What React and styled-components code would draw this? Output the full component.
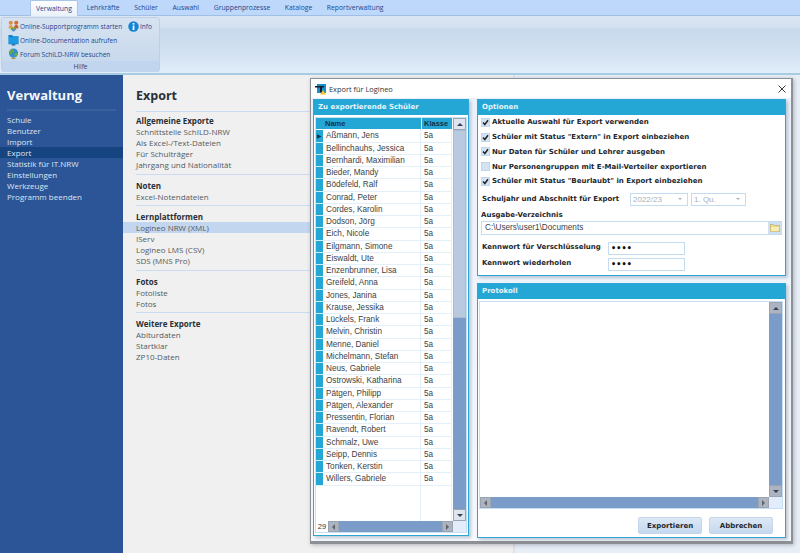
import { Fragment } from 'react';
import styled, { createGlobalStyle } from 'styled-components';

const STUDENTS = [
    'Aßmann, Jens', 'Bellinchauhs, Jessica', 'Bernhardi, Maximilian', 'Bieder, Mandy', 'Bödefeld, Ralf',
    'Conrad, Peter', 'Cordes, Karolin', 'Dodson, Jörg', 'Eich, Nicole', 'Eilgmann, Simone',
    'Eiswaldt, Ute', 'Enzenbrunner, Lisa', 'Greifeld, Anna', 'Jones, Janina', 'Krause, Jessika',
    'Lückels, Frank', 'Melvin, Christin', 'Menne, Daniel', 'Michelmann, Stefan', 'Neus, Gabriele',
    'Ostrowski, Katharina', 'Pätgen, Philipp', 'Pätgen, Alexander', 'Pressentin, Florian', 'Ravendt, Robert',
    'Schmalz, Uwe', 'Seipp, Dennis', 'Tonken, Kerstin', 'Willers, Gabriele',
];

const TABS = ['Verwaltung', 'Lehrkräfte', 'Schüler', 'Auswahl', 'Gruppenprozesse', 'Kataloge', 'Reportverwaltung'];

const NAV = ['Schule', 'Benutzer', 'Import', 'Export', 'Statistik für IT.NRW', 'Einstellungen', 'Werkzeuge', 'Programm beenden'];

const SECTIONS = [
    { title: 'Allgemeine Exporte', items: ['Schnittstelle SchILD-NRW', 'Als Excel-/Text-Dateien', 'Für Schulträger', 'Jahrgang und Nationalität'] },
    { title: 'Noten', items: ['Excel-Notendateien'] },
    { title: 'Lernplattformen', items: ['Logineo NRW (XML)', 'IServ', 'Logineo LMS (CSV)', 'SDS (MNS Pro)'] },
    { title: 'Fotos', items: ['Fotoliste', 'Fotos'] },
    { title: 'Weitere Exporte', items: ['Abiturdaten', 'Startklar', 'ZP10-Daten'] },
];

const OPTIONS = [
    { label: 'Aktuelle Auswahl für Export verwenden', checked: true },
    { label: 'Schüler mit Status "Extern" in Export einbeziehen', checked: true },
    { label: 'Nur Daten für Schüler und Lehrer ausgeben', checked: true },
    { label: 'Nur Personengruppen mit E-Mail-Verteiler exportieren', checked: false },
    { label: 'Schüler mit Status "Beurlaubt" in Export einbeziehen', checked: true },
];

const GlobalStyle = createGlobalStyle`
    html, body {
        margin: 0;
        height: 553px;
        overflow: hidden;
        background: #f0f0f0;
    }
    * {
        box-sizing: border-box;
    }
`;

const Page = styled.div`
    position: relative;
    display: flex;
    flex-direction: column;
    width: 800px;
    height: 553px;
    font-family: 'Open Sans', 'Liberation Sans', sans-serif;
`;

const TabStrip = styled.div`
    display: flex;
    align-items: flex-end;
    height: 16px;
    padding-left: 30px;
    background: #bdd8fb;
    border-bottom: 1px solid #9fbfe4;
`;

const Tab = styled.div`
    height: ${({ $active }) => ($active ? '16px' : '15px')};
    margin-bottom: ${({ $active }) => ($active ? '-1px' : '0')};
    margin-right: ${({ $active }) => ($active ? '1.5px' : '0')};
    padding: 0 ${({ $active }) => ($active ? '5px' : '7.3px')};
    font-size: 6.8px;
    line-height: 15px;
    color: #23468c;
    background: ${({ $active }) => ($active ? 'linear-gradient(#fdfeff, #eaf1fa)' : 'transparent')};
    border: ${({ $active }) => ($active ? '1px solid #a9c6e8' : '0')};
    border-bottom: 0;
    border-radius: 2px 2px 0 0;
`;

const Ribbon = styled.div`
    display: flex;
    height: 59px;
    padding: 1px;
    background: linear-gradient(#dbe6f3 0, #d6e2f0 10px, #c8d9ec 14px, #d3e2f2 38px, #e1edfa 57px);
    border-bottom: 2px solid #a6cce2;
`;

const RibbonGroup = styled.div`
    display: flex;
    flex-direction: column;
    width: 159px;
    height: 55px;
    background: linear-gradient(#d6e2f0, #c6d8ec);
    border: 1px solid #bcd0e7;
    border-radius: 3px;
`;

const RibbonBody = styled.div`
    flex: 1;
    display: grid;
    grid-template-columns: 120px auto;
    grid-template-rows: repeat(3, 14px);
    align-content: start;
    padding: 1px 0 0 6px;
`;

const RibbonAction = styled.div`
    display: flex;
    align-items: center;
    gap: 1px;
    font-size: 6.5px;
    white-space: nowrap;
    color: #23468c;
    svg {
        flex: none;
    }
`;

const RibbonCaption = styled.div`
    height: 11px;
    font-size: 6.6px;
    line-height: 11px;
    text-align: center;
    color: #23468c;
    background: #c1d6ee;
`;

const Main = styled.div`
    flex: 1;
    display: flex;
    min-height: 0;
`;

const Sidebar = styled.nav`
    width: 123px;
    padding: 13px 0 0;
    background: #2b5597;
`;

const SidebarTitle = styled.h1`
    margin: 0 7px;
    height: 23px;
    font-size: 13px;
    line-height: 15px;
    font-weight: 700;
    color: #f4f7fb;
    border-bottom: 2px solid #38619e;
`;

const NavList = styled.div`
    margin-top: 3px;
`;

const NavItem = styled.div`
    height: 11px;
    padding-left: 7px;
    font-size: 8px;
    line-height: 11px;
    color: #dbe5f2;
    background: ${({ $active }) => ($active ? '#164480' : 'transparent')};
`;

const Content = styled.section`
    width: 392px;
    padding-top: 13px;
    background: #f0f0f0;
    border-right: 2px solid #dde1e6;
`;

const ContentTitle = styled.h2`
    margin: 0 0 0 13px;
    height: 23px;
    font-size: 12.5px;
    line-height: 15px;
    font-weight: 700;
    color: #2b2f36;
`;

const Section = styled.div`
    padding-bottom: 3.5px;
    &::before {
        content: '';
        display: block;
        height: 1px;
        margin: 0 0 5px 13px;
        background: #cbdcf0;
    }
    &:first-of-type::before {
        margin-bottom: 3px;
    }
`;

const SectionTitle = styled.div`
    height: 11px;
    padding-left: 13px;
    font-size: 8px;
    line-height: 11px;
    font-weight: 700;
    color: #2b2f36;
`;

const SectionItem = styled.div`
    height: 11px;
    padding-left: 13px;
    font-size: 8px;
    line-height: 11px;
    color: #555a60;
    background: ${({ $active }) => ($active ? '#c3d6f0' : 'transparent')};
`;

const Backdrop = styled.div`
    flex: 1;
    background: #e8eef6;
`;

const Dialog = styled.div`
    position: absolute;
    left: 310px;
    top: 78px;
    display: flex;
    flex-direction: column;
    width: 483px;
    height: 466px;
    background: linear-gradient(#eaf1fb, #f6f9fd);
    border: 1px solid #8d9094;
    border-bottom-width: 3px;
    border-right-width: 2px;
    box-shadow: 1px 1px 4px rgba(60, 70, 90, 0.35);
`;

const DialogTitle = styled.div`
    display: flex;
    align-items: center;
    gap: 2px;
    height: 19px;
    padding: 0 5px 0 4px;
    font-size: 7.4px;
    color: #30343a;
    background: #fff;
    svg {
        flex: none;
    }
`;

const CloseButton = styled.div`
    margin-left: auto;
    display: flex;
`;

const DialogBody = styled.div`
    flex: 1;
    display: flex;
    gap: 8px;
    padding: 1px 5px 3px 2px;
    min-height: 0;
`;

const RightColumn = styled.div`
    flex: 1;
    display: flex;
    flex-direction: column;
    gap: 7px;
`;

const Panel = styled.div`
    display: flex;
    flex-direction: column;
    width: ${({ $width }) => $width || 'auto'};
    height: ${({ $height }) => $height || 'auto'};
    flex: ${({ $grow }) => ($grow ? 1 : 'none')};
    background: #fff;
    border: 1px solid #2ba6d6;
    box-shadow: 2px 2px 3px rgba(90, 110, 140, 0.35);
`;

const PanelHeader = styled.div`
    flex: none;
    height: 15px;
    padding-left: 4px;
    font-family: 'DejaVu Sans', sans-serif;
    font-size: 7px;
    font-weight: 700;
    line-height: 15px;
    color: #e6f5fb;
    background: #25a7d6;
`;

const ListFrame = styled.div`
    flex: 1;
    display: grid;
    grid-template-columns: 1fr 13px;
    grid-template-rows: 1fr 11px;
    margin: 2px 1px 2px 1px;
    min-height: 0;
    border: 1px solid #c6dff3;
`;

const Table = styled.div`
    display: grid;
    grid-template-columns: 7px 98px 31px;
    grid-auto-rows: 12.25px;
    align-content: start;
    overflow: hidden;
    font-family: 'Liberation Sans', sans-serif;
    font-size: 8.2px;
    color: #3c3f44;
    background:
        linear-gradient(#e3eff9, #e3eff9) 104px 0 / 1px 100% no-repeat,
        linear-gradient(#e3eff9, #e3eff9) 135px 0 / 1px 100% no-repeat;
`;

const HeaderCell = styled.div`
    height: 11px;
    padding-left: 2px;
    font-size: 7.5px;
    font-weight: 700;
    line-height: 11px;
    color: #10314c;
    background: #25a7d6;
    border-left: ${({ $divided }) => ($divided ? '1px solid #d6eef8' : '0')};
`;

const Indicator = styled.div`
    background: #25a7d6;
    border-bottom: 1px solid #d6eef8;
    color: #14344f;
    font-size: 6px;
    line-height: 12px;
    text-align: center;
`;

const Cell = styled.div`
    padding-left: 3px;
    line-height: 12px;
    white-space: nowrap;
    border-bottom: 1px solid #e3eff9;
    border-right: 1px solid #e3eff9;
`;

const ScrollBar = styled.div`
    display: flex;
    flex-direction: ${({ $horizontal }) => ($horizontal ? 'row' : 'column')};
    justify-content: space-between;
    background: #7b9bc8;
`;

const RowCount = styled.div`
    width: 12px;
    flex: none;
    font-family: 'Liberation Sans', sans-serif;
    font-size: 7.5px;
    line-height: 11px;
    text-align: center;
    color: #33363b;
    background: #fff;
`;

const ScrollThumb = styled.div`
    flex: none;
    height: 188px;
    margin-bottom: auto;
    width: 100%;
    background: #b9c9df;
    border: 1px solid #a9bcd6;
`;

const ScrollButton = styled.div`
    flex: none;
    display: flex;
    align-items: center;
    justify-content: center;
    width: ${({ $size }) => $size || '100%'};
    height: ${({ $size }) => $size || '12px'};
    background: ${({ $light }) => ($light ? '#dfe5ee' : '#adb4bf')};
    border: 1px solid #9aa4b3;
`;

const ScrollCorner = styled.div`
    background: #e2ecfa;
`;

const Arrow = styled.span`
    width: 0;
    height: 0;
    border-style: solid;
    border-width: ${({ $dir }) => ($dir === 'up' || $dir === 'down' ? '3px 3.5px' : '3px')};
    border-color: transparent;
    border-bottom-color: ${({ $dir }) => ($dir === 'up' ? '#33415c' : 'transparent')};
    border-top-color: ${({ $dir }) => ($dir === 'down' ? '#33415c' : 'transparent')};
    border-left-color: ${({ $dir }) => ($dir === 'right' ? '#5e646e' : 'transparent')};
    border-right-color: ${({ $dir }) => ($dir === 'left' ? '#5e646e' : 'transparent')};
    margin-top: ${({ $dir }) => ($dir === 'up' ? '-3px' : $dir === 'down' ? '3px' : '0')};
    margin-left: ${({ $dir }) => ($dir === 'left' ? '-3px' : $dir === 'right' ? '3px' : '0')};
`;

const OptionsBody = styled.div`
    flex: 1;
    display: flex;
    flex-direction: column;
    padding: 0 3px;
    font-family: 'DejaVu Sans', sans-serif;
    font-size: 7px;
    font-weight: 700;
    color: #23272d;
`;

const CheckRow = styled.label`
    display: flex;
    align-items: center;
    gap: 2px;
    height: 14.75px;
    white-space: nowrap;
`;

const CheckBox = styled.span`
    flex: none;
    display: flex;
    align-items: center;
    justify-content: center;
    width: 9px;
    height: 9px;
    background: #d3e3f4;
    border: 1px solid #c3d6ec;
`;

const YearRow = styled.div`
    display: flex;
    align-items: center;
    height: 15px;
    margin-top: 3px;
    white-space: nowrap;
`;

const YearLabel = styled.span`
    width: 149px;
    padding-left: 1px;
`;

const Select = styled.div`
    display: flex;
    align-items: center;
    justify-content: space-between;
    width: ${({ $width }) => $width};
    height: 13px;
    margin-right: 3px;
    padding: 0 5px 0 2px;
    font-family: 'Liberation Sans', sans-serif;
    font-size: 8px;
    font-weight: 400;
    color: #a9b0ba;
    background: #fff;
    border: 1px solid #c4dcf2;
`;

const Caret = styled.span`
    width: 0;
    height: 0;
    border: 2px solid transparent;
    border-top: 2px solid #a9b0ba;
    margin-top: 2px;
`;

const FieldLabel = styled.div`
    height: 10px;
    margin-top: 3px;
    line-height: 10px;
`;

const PathField = styled.div`
    display: flex;
    align-items: center;
    justify-content: space-between;
    height: 14px;
    margin-top: 1px;
    padding-left: 3px;
    font-family: 'Liberation Sans', sans-serif;
    font-size: 8.2px;
    font-weight: 400;
    color: #3c3f44;
    border: 1px solid #c4dcf2;
`;

const FolderButton = styled.div`
    display: flex;
    align-items: center;
    justify-content: center;
    width: 13px;
    height: 12px;
    background: #cfe0f3;
`;

const PasswordRow = styled.div`
    display: flex;
    align-items: center;
    height: 15px;
    margin-top: ${({ $first }) => ($first ? '6px' : '1px')};
    padding-left: 1px;
`;

const PasswordLabel = styled.span`
    width: 126px;
    margin-top: -2px;
`;

const PasswordField = styled.div`
    width: 77px;
    height: 13px;
    padding-left: 2px;
    font-size: 8px;
    line-height: 12px;
    color: #111;
    letter-spacing: 0.1px;
    border: 1px solid #c4dcf2;
`;

const LogFrame = styled(ListFrame)`
    flex: none;
    height: 208px;
    margin: 2px 2px 0 1px;
    background: #fff;
`;

const ButtonBar = styled.div`
    display: flex;
    justify-content: flex-end;
    gap: 7px;
    margin-top: 8px;
    padding-right: 12px;
`;

const Button = styled.button`
    width: 64px;
    height: 17px;
    padding: 0;
    font-family: 'DejaVu Sans', sans-serif;
    font-size: 7px;
    font-weight: 700;
    color: #23272d;
    background: linear-gradient(#dde8f5, #c5d8ee);
    border: 1px solid #c3d6ec;
    border-radius: 2px;
`;

const LogBlank = styled.div`
    background: #fff;
`;

const Horizontal = styled.div`
    display: flex;
    min-width: 0;
`;

const HorizontalTrack = styled(ScrollBar)`
    flex: 1;
`;

const SupportIcon = () => (
    <svg width="11" height="12" viewBox="0 0 12 13">
        <circle cx="3" cy="3" r="2.2" fill="#e08a3c" />
        <circle cx="9" cy="3" r="2.2" fill="#d9692b" />
        <path d="M0.5 9c0-2.5 1.2-4 2.5-4s2.5 1.5 2.5 4z" fill="#e9a24b" />
        <path d="M6.5 9c0-2.5 1.2-4 2.5-4s2.5 1.5 2.5 4z" fill="#c85a2c" />
        <rect x="3" y="8" width="6" height="3" fill="#7aa23f" />
        <circle cx="6" cy="11" r="1.5" fill="#5a8ed0" />
    </svg>
);

const DocIcon = () => (
    <svg width="11" height="12" viewBox="0 0 12 13">
        <path d="M0.5 1h4l1 1.5h6v8.5h-11z" fill="#0d84cf" />
        <rect x="1" y="3.5" width="10" height="7" fill="#1c9be0" />
        <rect x="4" y="11" width="4" height="1.5" fill="#27639b" />
    </svg>
);

const GlobeIcon = () => (
    <svg width="11" height="12" viewBox="0 0 12 13">
        <circle cx="6" cy="5.5" r="5" fill="#2f8fd0" />
        <path d="M2.5 2.5c2-1.5 3.5-1 4 0s-1 2-2 2.5-1 2-2 1.5-1.5-2.5 0-4zM7 6c1.5-1 3-.5 3.5 0s-1 3.5-2 3.5-2-2.5-1.5-3.5z" fill="#6ea93a" />
        <rect x="4" y="10.5" width="4" height="1.5" fill="#b68a3a" />
    </svg>
);

const InfoIcon = () => (
    <svg width="11" height="11" viewBox="0 0 11 11">
        <circle cx="5.5" cy="5.5" r="5.2" fill="#1484d6" />
        <rect x="4.7" y="4.5" width="1.7" height="4.5" fill="#fff" />
        <rect x="4.7" y="2" width="1.7" height="1.6" fill="#fff" />
    </svg>
);

const WindowIcon = () => (
    <svg width="12" height="12" viewBox="0 0 12 12">
        <rect x="2" y="1" width="9" height="9" fill="#1b8fc9" />
        <path d="M0 3h9v1.5H7v5H5v-5H0z" fill="#10202f" />
        <path d="M8 7l3 4.5H5z" fill="#f2c230" />
    </svg>
);

const CloseIcon = () => (
    <svg width="8" height="8" viewBox="0 0 8 8">
        <path d="M0.5 0.5l7 7M7.5 0.5l-7 7" stroke="#3a3d42" strokeWidth="1" fill="none" />
    </svg>
);

const CheckMark = () => (
    <svg width="7" height="7" viewBox="0 0 7 7">
        <path d="M1 3.5l1.8 2L6 1.2" stroke="#20252c" strokeWidth="1.5" fill="none" />
    </svg>
);

const FolderIcon = () => (
    <svg width="10" height="9" viewBox="0 0 10 9">
        <path d="M0.5 1.5h3l1 1h5v6h-9z" fill="#f0dc8c" stroke="#b9a14c" strokeWidth="0.6" />
        <path d="M1 4h8.5l-1 4.3H0.8z" fill="#f8ecb0" />
    </svg>
);

const VerticalScroll = ({ thumb }) => (
    <ScrollBar>
        <ScrollButton $light={thumb}>
            <Arrow $dir="up" />
        </ScrollButton>
        {thumb && <ScrollThumb />}
        <ScrollButton $light={thumb}>
            <Arrow $dir="down" />
        </ScrollButton>
    </ScrollBar>
);

const HorizontalScroll = ({ count }) => (
    <Horizontal>
        {count && <RowCount>{count}</RowCount>}
        <HorizontalTrack $horizontal>
            <ScrollButton $size="11px">
                <Arrow $dir="left" />
            </ScrollButton>
            <ScrollButton $size="11px">
                <Arrow $dir="right" />
            </ScrollButton>
        </HorizontalTrack>
    </Horizontal>
);

export default function App() {
    return (
        <Page>
            <GlobalStyle />
            <TabStrip>
                {TABS.map((tab, index) => (
                    <Tab key={tab} $active={index === 0}>
                        {tab}
                    </Tab>
                ))}
            </TabStrip>
            <Ribbon>
                <RibbonGroup>
                    <RibbonBody>
                        <RibbonAction>
                            <SupportIcon />
                            Online-Supportprogramm starten
                        </RibbonAction>
                        <RibbonAction>
                            <InfoIcon />
                            Info
                        </RibbonAction>
                        <RibbonAction>
                            <DocIcon />
                            Online-Documentation aufrufen
                        </RibbonAction>
                        <span />
                        <RibbonAction>
                            <GlobeIcon />
                            Forum SchILD-NRW besuchen
                        </RibbonAction>
                    </RibbonBody>
                    <RibbonCaption>Hilfe</RibbonCaption>
                </RibbonGroup>
            </Ribbon>
            <Main>
                <Sidebar>
                    <SidebarTitle>Verwaltung</SidebarTitle>
                    <NavList>
                        {NAV.map((item) => (
                            <NavItem key={item} $active={item === 'Export'}>
                                {item}
                            </NavItem>
                        ))}
                    </NavList>
                </Sidebar>
                <Content>
                    <ContentTitle>Export</ContentTitle>
                    {SECTIONS.map(({ title, items }) => (
                        <Section key={title}>
                            <SectionTitle>{title}</SectionTitle>
                            {items.map((item) => (
                                <SectionItem key={item} $active={item === 'Logineo NRW (XML)'}>
                                    {item}
                                </SectionItem>
                            ))}
                        </Section>
                    ))}
                </Content>
                <Backdrop />
            </Main>
            <Dialog>
                <DialogTitle>
                    <WindowIcon />
                    Export für Logineo
                    <CloseButton>
                        <CloseIcon />
                    </CloseButton>
                </DialogTitle>
                <DialogBody>
                    <Panel $width="156px" $height="437px">
                        <PanelHeader>Zu exportierende Schüler</PanelHeader>
                        <ListFrame>
                            <Table>
                                <HeaderCell />
                                <HeaderCell>Name</HeaderCell>
                                <HeaderCell $divided>Klasse</HeaderCell>
                                {STUDENTS.map((name, index) => (
                                    <Fragment key={name}>
                                        <Indicator>{index === 0 ? '▶' : ''}</Indicator>
                                        <Cell>{name}</Cell>
                                        <Cell>5a</Cell>
                                    </Fragment>
                                ))}
                            </Table>
                            <VerticalScroll thumb />
                            <HorizontalScroll count="29" />
                            <ScrollCorner />
                        </ListFrame>
                    </Panel>
                    <RightColumn>
                        <Panel $height="177px">
                            <PanelHeader>Optionen</PanelHeader>
                            <OptionsBody>
                                {OPTIONS.map(({ label, checked }) => (
                                    <CheckRow key={label}>
                                        <CheckBox>{checked && <CheckMark />}</CheckBox>
                                        {label}
                                    </CheckRow>
                                ))}
                                <YearRow>
                                    <YearLabel>Schuljahr und Abschnitt für Export</YearLabel>
                                    <Select $width="58px">
                                        2022/23
                                        <Caret />
                                    </Select>
                                    <Select $width="55px">
                                        1. Qu.
                                        <Caret />
                                    </Select>
                                </YearRow>
                                <FieldLabel>Ausgabe-Verzeichnis</FieldLabel>
                                <PathField>
                                    C:\Users\user1\Documents
                                    <FolderButton>
                                        <FolderIcon />
                                    </FolderButton>
                                </PathField>
                                <PasswordRow $first>
                                    <PasswordLabel>Kennwort für Verschlüsselung</PasswordLabel>
                                    <PasswordField>••••</PasswordField>
                                </PasswordRow>
                                <PasswordRow>
                                    <PasswordLabel>Kennwort wiederholen</PasswordLabel>
                                    <PasswordField>••••</PasswordField>
                                </PasswordRow>
                            </OptionsBody>
                        </Panel>
                        <Panel $grow>
                            <PanelHeader>Protokoll</PanelHeader>
                            <LogFrame>
                                <LogBlank />
                                <VerticalScroll />
                                <HorizontalScroll />
                                <ScrollCorner />
                            </LogFrame>
                            <ButtonBar>
                                <Button>Exportieren</Button>
                                <Button>Abbrechen</Button>
                            </ButtonBar>
                        </Panel>
                    </RightColumn>
                </DialogBody>
            </Dialog>
        </Page>
    );
}
